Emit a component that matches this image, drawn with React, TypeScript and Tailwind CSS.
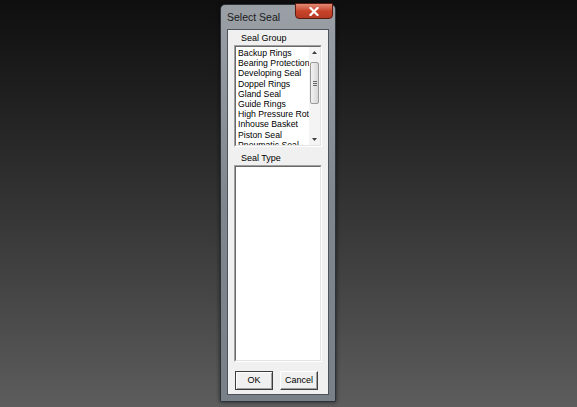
const groups = [
  "Backup Rings",
  "Bearing Protection",
  "Developing Seal",
  "Doppel Rings",
  "Gland Seal",
  "Guide Rings",
  "High Pressure Rotary",
  "Inhouse Basket",
  "Piston Seal",
  "Pneumatic Seal",
];

export default function App() {
  return (
    <div
      className="w-[577px] h-[407px] overflow-hidden bg-gradient-to-b from-[#0f0f0f] to-[#5d5d5d] pl-[220px] pt-[4px]"
      style={{ fontFamily: '"Liberation Sans", Arial, sans-serif' }}
    >
      {/* window */}
      <div className="relative w-[116px] h-[398px] rounded-t-[5px] border border-[#2c323a] bg-gradient-to-b from-[#9aa0a6] via-[#80868d] to-[#7a8088] shadow-[0_0_4px_rgba(0,0,0,0.6)] flex flex-col">
        <div className="h-[24px] flex items-center pl-[6px] pt-[2px] text-[10.5px] text-[#1a1a1a]">Select Seal</div>
        <div className="absolute top-[-2px] right-[2px] w-[38px] h-[16px] rounded-b-[4px] border border-[#5a1b12] bg-gradient-to-b from-[#e28a74] via-[#c8432a] to-[#b63a22] flex items-center justify-center">
          <svg width="10" height="9" viewBox="0 0 10 9">
            <path d="M1.5 1 L8.5 8 M8.5 1 L1.5 8" stroke="#ffffff" strokeWidth="2.2" strokeLinecap="square" />
          </svg>
        </div>
        {/* client */}
        <div className="mx-[6px] mb-[6px] flex-1 border border-[#4b535c] bg-[#f0f0f0] flex flex-col px-[6px] pt-[2px] pb-[4px] text-[8.7px] text-black">
          <div className="pl-[7px] h-[12px] leading-[12px] text-[9px]">Seal Group</div>
          <div className="mt-[1px] h-[102px] border border-t-[#a0a0a0] border-l-[#a0a0a0] border-r-[#ffffff] border-b-[#ffffff] flex">
            <div className="flex-1 bg-white overflow-hidden border border-t-[#696969] border-l-[#696969] border-r-[#e3e3e3] border-b-[#e3e3e3] flex">
              <div className="flex-1 overflow-hidden pl-[2px] pt-[1px]">
                {groups.map((g) => (
                  <div key={g} className="h-[10.2px] leading-[10px] whitespace-nowrap">
                    {g}
                  </div>
                ))}
              </div>
              <div className="w-[11px] bg-[#f4f4f4] flex flex-col items-center">
                <div className="h-[11px] flex items-center justify-center">
                  <svg width="5" height="3" viewBox="0 0 5 3"><path d="M0 3 L2.5 0 L5 3 Z" fill="#404040" /></svg>
                </div>
                <div className="mt-[4px] w-[9px] h-[42px] rounded-[2px] border border-[#9a9a9a] bg-gradient-to-r from-[#f2f2f2] to-[#d8d8d8] flex flex-col items-center justify-center gap-[1px]">
                  <div className="w-[4px] h-[1px] bg-[#666]" />
                  <div className="w-[4px] h-[1px] bg-[#666]" />
                  <div className="w-[4px] h-[1px] bg-[#666]" />
                </div>
                <div className="flex-1" />
                <div className="h-[11px] flex items-center justify-center">
                  <svg width="5" height="3" viewBox="0 0 5 3"><path d="M0 0 L2.5 3 L5 0 Z" fill="#404040" /></svg>
                </div>
              </div>
            </div>
          </div>
          <div className="mt-[5px] pl-[7px] h-[12px] leading-[12px] text-[9px]">Seal Type</div>
          <div className="mt-[1px] h-[197px] border border-t-[#a0a0a0] border-l-[#a0a0a0] border-r-[#ffffff] border-b-[#ffffff] flex">
            <div className="flex-1 bg-white border border-t-[#696969] border-l-[#696969] border-r-[#e3e3e3] border-b-[#e3e3e3]" />
          </div>
          <div className="mt-[9px] flex gap-[7px] pl-[1px]">
            <button className="w-[38px] h-[19px] bg-[#f0f0f0] border border-[#3c3c3c] shadow-[inset_1px_1px_0_#ffffff,inset_-1px_-1px_0_#a0a0a0] text-[9px] text-black">
              OK
            </button>
            <button className="w-[38px] h-[19px] bg-[#f0f0f0] border border-t-[#ffffff] border-l-[#ffffff] border-r-[#404040] border-b-[#404040] shadow-[inset_-1px_-1px_0_#a0a0a0] text-[9px] text-black">
              Cancel
            </button>
          </div>
        </div>
      </div>
    </div>
  );
}
